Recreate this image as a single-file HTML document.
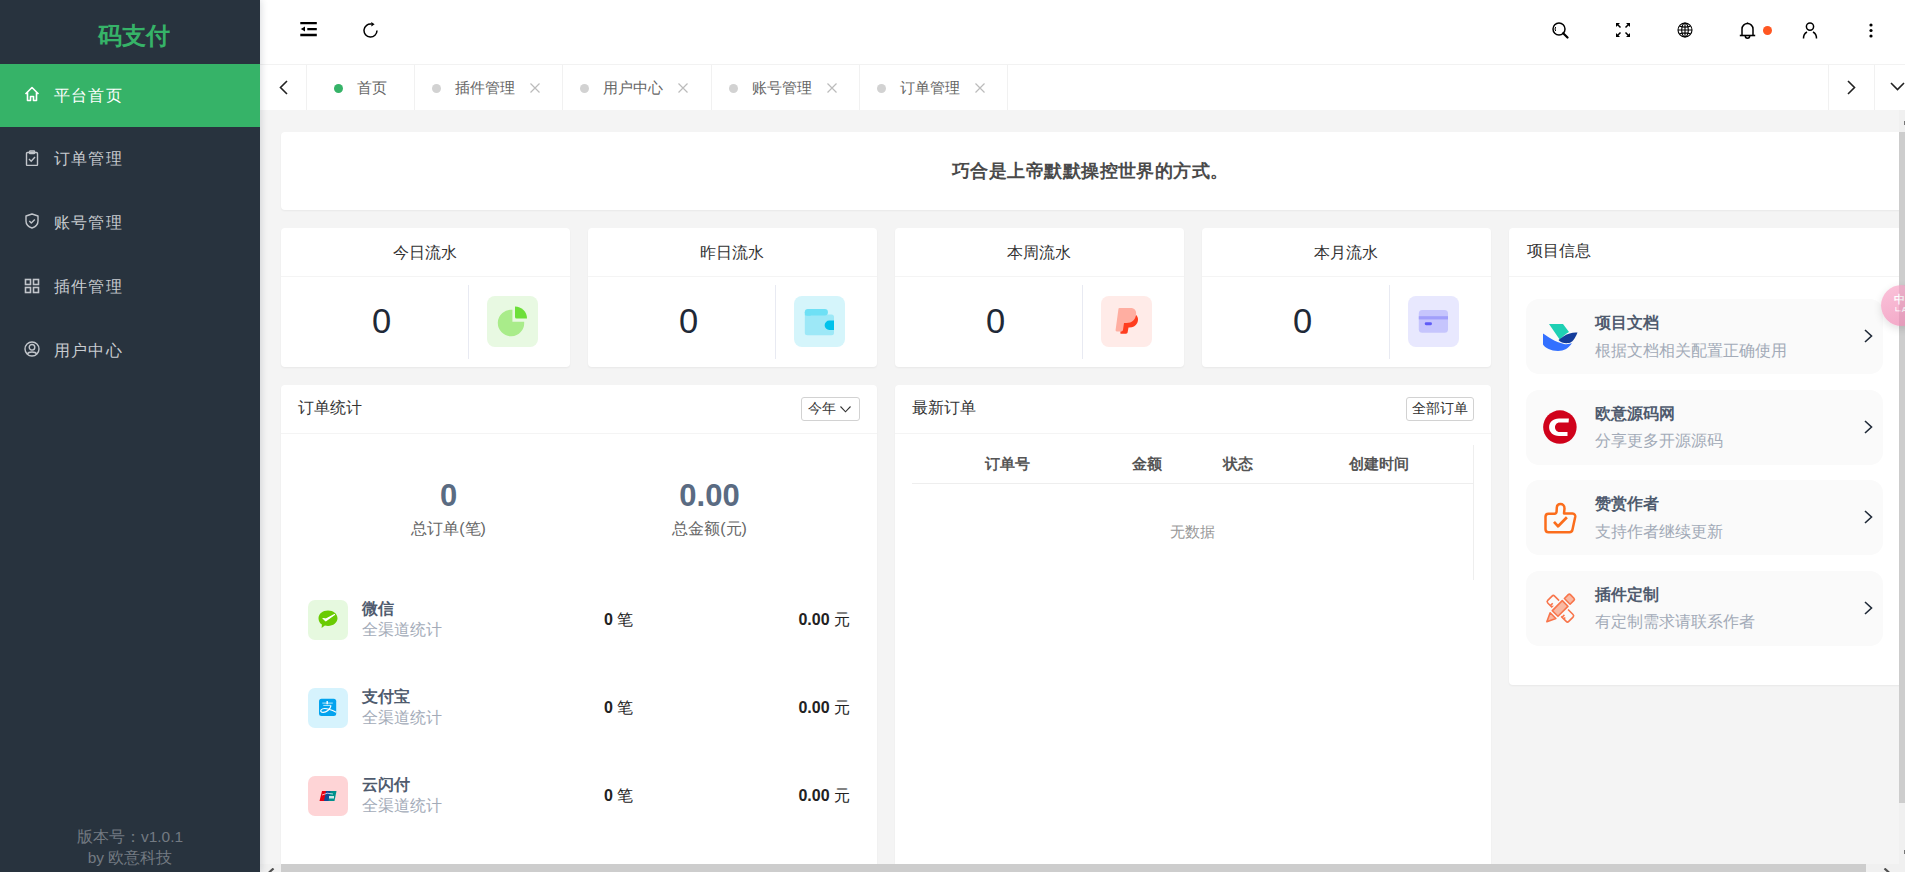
<!DOCTYPE html>
<html><head><meta charset="utf-8">
<style>
*{box-sizing:border-box;margin:0;padding:0}
html,body{width:1905px;height:872px;overflow:hidden;background:#f4f4f4;font-family:"Liberation Sans",sans-serif;color:#333}
.abs{position:absolute}
#side{position:absolute;left:0;top:0;width:260px;height:872px;background:#28333e;z-index:20;box-shadow:1px 0 7px rgba(20,30,50,.16)}
#logo{position:absolute;left:3.5px;top:0.5px;width:260px;height:64px;text-align:center;color:#36b368;font-weight:bold;font-size:24px;line-height:70px;letter-spacing:0}
.mi{position:absolute;left:0;width:260px;height:63.5px;color:#c9ccd0;font-weight:500;font-size:16px;letter-spacing:1.2px}
.mi.on{background:#36b368;color:#fff;height:63px}
.mi svg{position:absolute;left:24px;top:22px;width:16px;height:16px}
.mi span{position:absolute;left:54px;top:20.5px;line-height:22px}
#ver{position:absolute;left:0;top:826px;width:260px;text-align:center;color:#737a82;font-size:15.5px;line-height:21px}
#hdr{position:absolute;left:260px;top:0;width:1645px;height:65px;background:#fff;border-bottom:1px solid #f2f2f2}
#tabs{position:absolute;left:260px;top:65px;width:1645px;height:45px;background:#fff}
.tb{position:absolute;top:0;height:45px;border-right:1px solid #f1f1f1}
.tab{position:absolute;top:0;height:45px;border-right:1px solid #f1f1f1;font-size:14.5px;color:#666}
.tab .dot{position:absolute;top:19px;width:9px;height:9px;border-radius:50%;background:#d2d2d2}
.tab .t{position:absolute;top:12px;line-height:22px}
.tab svg{position:absolute;top:18px;width:10px;height:10px}
.card{position:absolute;background:#fff;border-radius:4px;box-shadow:0 1px 2px rgba(0,0,0,.05)}
.ch{position:absolute;left:0;top:0;width:100%;height:49px;border-bottom:1px solid #f4f4f4}

.st{text-align:center;font-size:16px;line-height:22px;color:#333}
.sv{top:75px;text-align:center;font-size:34.5px;line-height:36px;color:#1f2937}
.dv{left:187px;top:57px;width:1px;height:74px;background:#e8eaf2}
.ib{left:206px;top:68px;width:51px;height:51px;border-radius:8px}.ib svg{position:absolute;left:0;top:0}

.pi{position:absolute;left:17px;width:357px;height:75px;border-radius:13px;background:#fafafa}
.pt{position:absolute;left:69px;top:13px;font-size:16px;font-weight:bold;color:#4f5b6e;line-height:22px}
.ps{position:absolute;left:69px;top:40.5px;font-size:16px;color:#a3abb8;line-height:22px}
.chev{position:absolute;left:338px;top:30px;width:9px;height:14px}

.bn{position:absolute;top:93px;width:201px;text-align:center;font-size:31px;font-weight:bold;color:#5a6b82;line-height:36px}
.bl{position:absolute;top:132.5px;width:201px;text-align:center;font-size:16px;color:#666;line-height:22px}
.rn{position:absolute;left:81px;font-size:16px;font-weight:bold;color:#4f5b6e;line-height:22px}
.rs{position:absolute;left:81px;font-size:16px;color:#a3abb8;line-height:22px}
.rc{position:absolute;left:323px;font-size:16px;color:#222;line-height:22px}
.ra{position:absolute;right:27px;font-size:16px;color:#222;line-height:22px}
.rc b,.ra b{font-weight:bold}

.th{position:absolute;top:68px;font-size:15px;font-weight:bold;color:#555;line-height:22px}
</style></head><body>

<div id="side">
  <div id="logo">码支付</div>
  <div class="mi on" style="top:64px">
    <svg viewBox="0 0 16 16" fill="none" stroke="#fff" stroke-width="1.6" stroke-linejoin="round"><path d="M1.5 8 L8 1.5 L14.5 8 M3.5 6.5 V14.5 H6.5 V10.5 H9.5 V14.5 H12.5 V6.5"/></svg>
    <span>平台首页</span></div>
  <div class="mi" style="top:127.5px">
    <svg viewBox="0 0 16 16" fill="none" stroke="#c2c6cb" stroke-width="1.4"><rect x="2.5" y="2.5" width="11" height="13" rx="1"/><rect x="5.5" y="1" width="5" height="2.5" rx=".5"/><path d="M5 9 L7.2 11.2 L11 7"/></svg>
    <span>订单管理</span></div>
  <div class="mi" style="top:191px">
    <svg viewBox="0 0 16 16" fill="none" stroke="#c2c6cb" stroke-width="1.4" stroke-linejoin="round"><path d="M8 1 L14 3 V8 C14 11.5 11 14 8 15 C5 14 2 11.5 2 8 V3 Z"/><path d="M5.3 8 L7.3 10 L10.8 6.5"/></svg>
    <span>账号管理</span></div>
  <div class="mi" style="top:255.5px">
    <svg viewBox="0 0 16 16" fill="none" stroke="#c2c6cb" stroke-width="1.6"><rect x="1.5" y="1.5" width="5" height="5"/><rect x="9.5" y="1.5" width="5" height="5"/><rect x="1.5" y="9.5" width="5" height="5"/><rect x="9.5" y="9.5" width="5" height="5"/></svg>
    <span>插件管理</span></div>
  <div class="mi" style="top:319px">
    <svg viewBox="0 0 16 16" fill="none" stroke="#c2c6cb" stroke-width="1.4"><circle cx="8" cy="8" r="7"/><circle cx="8" cy="6.3" r="2.8"/><path d="M3.4 12.9 C4.6 10.3 11.4 10.3 12.6 12.9"/></svg>
    <span>用户中心</span></div>
  <div id="ver">版本号：v1.0.1<br>by 欧意科技</div>
</div>

<div id="hdr">
  <svg class="abs" style="left:40px;top:22px" width="17" height="15" viewBox="0 0 17 15"><g stroke="#000" stroke-width="2.3"><path d="M0.3 1.1 H16.8 M7.3 7.1 H16.8 M0.3 13 H16.8"/></g><path d="M0.8 7.1 L5 4.6 V9.6 Z" fill="#000"/></svg>
  <svg class="abs" style="left:103px;top:21.5px" width="17" height="17" viewBox="0 0 17 17" fill="none" stroke="#000" stroke-width="1.5"><path d="M14 8.5 A6.5 6.5 0 1 1 8.6 2.1"/><path d="M8.3 0 L11.6 2.2 L8.4 4.4 Z" fill="#000" stroke="none"/></svg>
  <svg class="abs" style="left:1292px;top:22px" width="17" height="17" viewBox="0 0 17 17" fill="none" stroke="#000" stroke-width="1.5"><circle cx="7" cy="7" r="6"/><path d="M3.6 5 A4 4 0 0 0 3.6 9" stroke-width="1"/><path d="M11.2 11.2 L15.5 15.5" stroke-width="2.2" stroke-linecap="round"/></svg>
  <svg class="abs" style="left:1355px;top:22px" width="16" height="16" viewBox="0 0 16 16" fill="none" stroke="#000" stroke-width="1.5"><path d="M1.5 1.5 L5.5 5.5 M10.5 5.5 L14.5 1.5 M1.5 14.5 L5.5 10.5 M10.5 10.5 L14.5 14.5"/><path d="M1 1 H5 L1 5 Z M15 1 H11 L15 5 Z M1 15 H5 L1 11 Z M15 15 H11 L15 11 Z" fill="#000" stroke="none"/></svg>
  <svg class="abs" style="left:1417px;top:22px" width="16" height="16" viewBox="0 0 16 16" fill="none" stroke="#000" stroke-width="1.1"><circle cx="8" cy="8" r="7"/><ellipse cx="8" cy="8" rx="3.3" ry="7"/><path d="M8 1 V15 M1 8 H15 M2.8 4.3 Q8 6 13.2 4.3 M2.8 11.7 Q8 10 13.2 11.7"/></svg>
  <svg class="abs" style="left:1479px;top:22px" width="17" height="17" viewBox="0 0 17 17" fill="none" stroke="#000" stroke-width="1.5"><path d="M3 13 V7 A5.5 5.5 0 0 1 14 7 V13"/><path d="M0.8 13.5 H16.2" stroke-width="1.6"/><path d="M6.3 14 A2.2 2.2 0 0 0 10.7 14"/><path d="M8.5 0.5 V1.8"/></svg>
  <div class="abs" style="left:1503px;top:26px;width:9px;height:9px;border-radius:50%;background:#ff5722"></div>
  <svg class="abs" style="left:1542px;top:22px" width="16" height="17" viewBox="0 0 16 17" fill="none" stroke="#000" stroke-width="1.5"><circle cx="8" cy="4.6" r="3.6"/><path d="M1.5 16.5 A6.5 7 0 0 1 5 10 M11 10 A6.5 7 0 0 1 14.5 16.5"/></svg>
  <svg class="abs" style="left:1609px;top:23px" width="4" height="15" viewBox="0 0 4 15" fill="#000"><circle cx="2" cy="2" r="1.6"/><circle cx="2" cy="7.5" r="1.6"/><circle cx="2" cy="13" r="1.6"/></svg>
</div>
<div id="tabs">
  <div class="tb" style="left:0;width:47px"><svg class="abs" style="left:19px;top:15px" width="9" height="15" viewBox="0 0 9 15" fill="none" stroke="#222" stroke-width="1.6"><path d="M8 1 L1.5 7.5 L8 14"/></svg></div>
  <div class="tab" style="left:47px;width:108px"><div class="dot" style="left:27px;background:#36b368"></div><div class="t" style="left:50px">首页</div></div>
  <div class="tab" style="left:155px;width:148px"><div class="dot" style="left:17px"></div><div class="t" style="left:40px">插件管理</div><svg style="left:115px" viewBox="0 0 10 10" stroke="#bbb" stroke-width="1.2"><path d="M0.5 0.5 L9.5 9.5 M9.5 0.5 L0.5 9.5"/></svg></div>
  <div class="tab" style="left:303px;width:148.5px"><div class="dot" style="left:17px"></div><div class="t" style="left:40px">用户中心</div><svg style="left:115px" viewBox="0 0 10 10" stroke="#bbb" stroke-width="1.2"><path d="M0.5 0.5 L9.5 9.5 M9.5 0.5 L0.5 9.5"/></svg></div>
  <div class="tab" style="left:451.5px;width:148px"><div class="dot" style="left:17px"></div><div class="t" style="left:40px">账号管理</div><svg style="left:115px" viewBox="0 0 10 10" stroke="#bbb" stroke-width="1.2"><path d="M0.5 0.5 L9.5 9.5 M9.5 0.5 L0.5 9.5"/></svg></div>
  <div class="tab" style="left:599.5px;width:148px"><div class="dot" style="left:17px"></div><div class="t" style="left:40px">订单管理</div><svg style="left:115px" viewBox="0 0 10 10" stroke="#bbb" stroke-width="1.2"><path d="M0.5 0.5 L9.5 9.5 M9.5 0.5 L0.5 9.5"/></svg></div>
  <div class="abs" style="left:1568px;top:0;width:1px;height:45px;background:#f1f1f1"></div>
  <svg class="abs" style="left:1587px;top:15px" width="9" height="15" viewBox="0 0 9 15" fill="none" stroke="#222" stroke-width="1.6"><path d="M1 1 L7.5 7.5 L1 14"/></svg>
  <div class="abs" style="left:1614px;top:0;width:1px;height:45px;background:#f1f1f1"></div>
  <svg class="abs" style="left:1630px;top:17px" width="15" height="9" viewBox="0 0 15 9" fill="none" stroke="#222" stroke-width="1.6"><path d="M1 1 L7.5 7.5 L14 1"/></svg>
</div>


<div class="card" style="left:281px;top:132px;width:1640px;height:78px">
  <div class="abs" style="left:671px;top:27px;font-size:18px;letter-spacing:.45px;font-weight:bold;color:#4a4a4a;line-height:24px;white-space:nowrap">巧合是上帝默默操控世界的方式。</div>
</div>

<div class="card" style="left:281px;top:228px;width:289px;height:139px"><div class="ch"></div>
  <div class="abs st" style="left:-1px;top:14px;width:289px">今日流水</div>
  <div class="abs sv" style="left:0;width:201px">0</div>
  <div class="abs dv"></div>
  <div class="abs ib" style="background:#e8f9e2"><svg width="51" height="51" viewBox="0 0 51 51"><path d="M25.4 13.87 A13.2 13.2 0 1 0 37.14 25.7 H25.4 Z" fill="#a9ec8a"/><path d="M28 10.5 A12 12 0 0 1 40 22.5 H29.5 Q28 22.5 28 21 Z" fill="#6ddf3a"/></svg></div>
</div>
<div class="card" style="left:588px;top:228px;width:289px;height:139px"><div class="ch"></div>
  <div class="abs st" style="left:-1px;top:14px;width:289px">昨日流水</div>
  <div class="abs sv" style="left:0;width:201px">0</div>
  <div class="abs dv"></div>
  <div class="abs ib" style="background:#d5f5fb"><svg width="51" height="51" viewBox="0 0 51 51"><rect x="10.8" y="18.5" width="29.2" height="20.7" rx="2.5" fill="#9de8f7"/><rect x="10.8" y="12.9" width="23.1" height="6.7" rx="3" fill="#6ee0f5"/><rect x="10.8" y="16" width="6" height="3.6" fill="#6ee0f5"/><path d="M40 24.6 H35.3 A4.65 4.65 0 0 0 35.3 33.9 H40 Z" fill="#00c2eb"/></svg></div>
</div>
<div class="card" style="left:895px;top:228px;width:289px;height:139px"><div class="ch"></div>
  <div class="abs st" style="left:-1px;top:14px;width:289px">本周流水</div>
  <div class="abs sv" style="left:0;width:201px">0</div>
  <div class="abs dv"></div>
  <div class="abs ib" style="background:#ffebe8"><svg width="51" height="51" viewBox="0 0 51 51"><path d="M19.5 37.7 C19.3 36.8 19.3 36.4 19.5 35.5 L21.5 23 H27 C31.5 23 34 21 34.8 18.7 C37.3 20.5 37.6 24 36.2 27 C34.7 30 31.8 31.5 28.3 31.5 H27.5 L26.7 36 C26.5 37 26 37.7 25 37.7 Z" fill="#ff3d1f"/><path d="M17.5 12.5 C17.7 12.2 18 12 18.5 12 H29.5 C33.5 12 35.6 14.6 35.1 18.5 C34.5 23.5 30.8 27 25.5 27 H23 L22 33.8 C21.8 34.8 21.2 35.4 20.3 35.4 H15.8 C15 35.4 14.5 34.8 14.6 34 Z" fill="#ffaea1"/></svg></div>
</div>
<div class="card" style="left:1202px;top:228px;width:289px;height:139px"><div class="ch"></div>
  <div class="abs st" style="left:-1px;top:14px;width:289px">本月流水</div>
  <div class="abs sv" style="left:0;width:201px">0</div>
  <div class="abs dv"></div>
  <div class="abs ib" style="background:#e8e8fe"><svg width="51" height="51" viewBox="0 0 51 51"><rect x="10.8" y="14" width="29.2" height="22.8" rx="3.5" fill="#c6c5fd"/><rect x="10.8" y="20.2" width="29.2" height="3.2" fill="#a19ffb"/><rect x="16.7" y="26.3" width="7.3" height="2.9" rx="1.45" fill="#5f5cf6"/></svg></div>
</div>

<div class="card" style="left:1509px;top:228px;width:420px;height:457px"><div class="ch"></div>
  <div class="abs" style="left:18px;top:12px;font-size:16px;line-height:22px;color:#333">项目信息</div>
  <div class="pi" style="top:71px">
    <svg class="abs" style="left:17px;top:25px" width="35" height="27" viewBox="0 0 35 27"><path d="M6 0 H20 L26 8 C22 10 19 13 17 16 Z" fill="#1ed0b4"/><path d="M34.5 8.5 C30 8 25 9.5 21 12 L15.5 16 C18 19 22 19.5 26 19 C29 18.5 32 15 34.5 8.5 Z" fill="#133c9a"/><path d="M0 9.5 C5 13 12 18 21 20 C24 20.5 27 20 29 19 C26 24 21 27 15 27 C8 27 2 24 0 20.5 Z" fill="#3370ff"/></svg>
    <div class="pt">项目文档</div><div class="ps">根据文档相关配置正确使用</div><svg class="chev" viewBox="0 0 9 14" fill="none" stroke="#1f2937" stroke-width="1.6"><path d="M1 1 L7.5 7 L1 13"/></svg></div>
  <div class="pi" style="top:161.5px">
    <svg class="abs" style="left:17px;top:20px" width="35" height="35" viewBox="0 0 35 35"><circle cx="16.9" cy="17.1" r="16.75" fill="#d0021b"/><path d="M25.9 8.6 H16 C10 8.6 6.1 12.5 6.1 17.2 C6.1 22 10 25.9 16 25.9 H24.5 V22 H16.5 C13.8 22 12 19.8 12 17.25 C12 14.7 13.8 12.5 16.5 12.5 H25.6 Z" fill="#fff"/></svg>
    <div class="pt">欧意源码网</div><div class="ps">分享更多开源源码</div><svg class="chev" viewBox="0 0 9 14" fill="none" stroke="#1f2937" stroke-width="1.6"><path d="M1 1 L7.5 7 L1 13"/></svg></div>
  <div class="pi" style="top:252px">
    <svg class="abs" style="left:17px;top:19px" width="36" height="36" viewBox="0 0 36 36" fill="none" stroke="#fb6d1c" stroke-width="2.5" stroke-linejoin="round"><path d="M5.5 14.8 H11.5 C12.8 14.8 13.5 13.8 13.6 12.5 L13.8 8.5 C14 6 15.8 5 17.5 5 C19.5 5 21.5 6.5 21.5 9.5 L21 14.5 H29.5 C31.5 14.5 32.5 16.3 32.2 18 L29.5 30.5 C29.2 32.2 28.2 33.2 26.5 33.2 H5.5 C3.8 33.2 2.5 32 2.5 30.2 V17.8 C2.5 16 3.8 14.8 5.5 14.8 Z"/><path d="M11 22.8 L15.1 27.3 L23.9 18.2" stroke-width="2.7"/></svg>
    <div class="pt">赞赏作者</div><div class="ps">支持作者继续更新</div><svg class="chev" viewBox="0 0 9 14" fill="none" stroke="#1f2937" stroke-width="1.6"><path d="M1 1 L7.5 7 L1 13"/></svg></div>
  <div class="pi" style="top:342.5px">
    <svg class="abs" style="left:18px;top:20px" width="36" height="36" viewBox="0 0 36 36" stroke-linejoin="round">
<g transform="translate(5.9 7.25) rotate(45)" stroke="#f8754b" stroke-width="1.6" fill="none"><rect x="0" y="-4.85" width="29.7" height="9.7" rx="1.8" fill="#fafafa"/><path d="M5.5 4.85 V1.5 M8 4.85 V2.8 M22 4.85 V1.5 M24.5 4.85 V2.8"/></g>
<g transform="translate(2.5 31.1) rotate(-45)" stroke-width="1.6">
<path d="M0.5 0 L9.2 -4.05 V4.05 Z M12.2 -4 H26.3 V4 H12.2 Z M29.3 -4 H34.8 Q36.3 -4 36.3 -2.5 V2.5 Q36.3 4 34.8 4 H29.3 Z" fill="none" stroke="#fafafa" stroke-width="4.5"/>
<path d="M0.5 0 L9.2 -4.05 V4.05 Z" fill="#f9b9a3" stroke="#f8754b"/>
<rect x="12.2" y="-4" width="14.1" height="8" fill="#f9b9a3" stroke="#f8754b"/>
<path d="M29.3 -4 H34.8 Q36.3 -4 36.3 -2.5 V2.5 Q36.3 4 34.8 4 H29.3 Z" fill="#f9b9a3" stroke="#f8754b"/>
</g></svg>
    <div class="pt">插件定制</div><div class="ps">有定制需求请联系作者</div><svg class="chev" viewBox="0 0 9 14" fill="none" stroke="#1f2937" stroke-width="1.6"><path d="M1 1 L7.5 7 L1 13"/></svg></div>
</div>

<div class="card" style="left:281px;top:385px;width:596px;height:520px"><div class="ch"></div>
  <div class="abs" style="left:17px;top:12px;font-size:16px;line-height:22px;color:#333">订单统计</div>
  <div class="abs" style="left:520px;top:12px;width:59px;height:24px;border:1px solid #d2d2d2;border-radius:3px;font-size:13.5px;line-height:21px;color:#333;padding-left:6px">今年<svg class="abs" style="left:38px;top:8px" width="11" height="7" viewBox="0 0 11 7" fill="none" stroke="#333" stroke-width="1.1"><path d="M0.5 0.5 L5.5 5.8 L10.5 0.5"/></svg></div>
  <div class="bn" style="left:67px">0</div><div class="bl" style="left:67px">总订单(笔)</div>
  <div class="bn" style="left:328px">0.00</div><div class="bl" style="left:328px">总金额(元)</div>
  <div class="abs" style="left:27px;top:215px;width:40px;height:40px;border-radius:7px;background:#e6f9df"><svg class="abs" style="left:10px;top:10px" width="20" height="19" viewBox="0 0 20 19"><path d="M10 0.5 C15.3 0.5 19.5 3.9 19.5 8.2 C19.5 12.5 15.3 15.9 10 15.9 C8.9 15.9 7.9 15.8 6.9 15.5 L3.6 18 L3.9 14.6 C1.9 13.2 0.5 10.8 0.5 8.2 C0.5 3.9 4.7 0.5 10 0.5 Z" fill="#6acb03"/><path d="M5 8.6 L7.8 10.8 L16.5 4.6 L8 9 Z" fill="#fff" stroke="#fff" stroke-width="1.2" stroke-linejoin="round"/></svg></div>
  <div class="rn" style="top:213px">微信</div><div class="rs" style="top:234px">全渠道统计</div>
  <div class="rc" style="top:224px"><b>0</b> 笔</div><div class="ra" style="top:224px"><b>0.00</b> 元</div>
  <div class="abs" style="left:27px;top:303px;width:40px;height:40px;border-radius:7px;background:#d6f3fd"><svg class="abs" style="left:0;top:0" width="40" height="40" viewBox="0 0 40 40"><rect x="11" y="10.8" width="17.2" height="17.2" rx="2.5" fill="#03a3ee"/><path d="M14.3 15.1 H24.8 M15.3 17.4 H23.2" stroke="#cfeffc" stroke-width="0.9"/><path d="M19.2 13 V16.3" stroke="#fff" stroke-width="1.4"/><path d="M23 17.6 C22 21.8 18.3 24.3 15.2 24.3 C13 24.3 12.3 23 13 22 C14.5 20 19 19.6 28.2 24.2" fill="none" stroke="#fff" stroke-width="1.2"/></svg></div>
  <div class="rn" style="top:301px">支付宝</div><div class="rs" style="top:322px">全渠道统计</div>
  <div class="rc" style="top:312px"><b>0</b> 笔</div><div class="ra" style="top:312px"><b>0.00</b> 元</div>
  <div class="abs" style="left:27px;top:391px;width:40px;height:40px;border-radius:7px;background:#fed4d6"><svg class="abs" style="left:11px;top:15px" width="18" height="10" viewBox="0 0 18 10"><path d="M3 0 H8 L6 10 H0.5 Z" fill="#e60012"/><path d="M7 0 H12.5 L10.5 10 H5 Z" fill="#0e4c96"/><path d="M11.5 0 H17.5 L15.5 10 H9.5 Z" fill="#00908c"/><path d="M3 4 Q8 1 14 3" stroke="#fff" stroke-width=".7" fill="none"/><rect x="10" y="5" width="5" height="2.5" fill="#fff" opacity=".8"/></svg></div>
  <div class="rn" style="top:389px">云闪付</div><div class="rs" style="top:410px">全渠道统计</div>
  <div class="rc" style="top:400px"><b>0</b> 笔</div><div class="ra" style="top:400px"><b>0.00</b> 元</div>

</div>

<div class="card" style="left:895px;top:385px;width:596px;height:520px"><div class="ch"></div>
  <div class="abs" style="left:17px;top:12px;font-size:16px;line-height:22px;color:#333">最新订单</div>
  <div class="abs" style="left:511px;top:12px;width:68px;height:24px;border:1px solid #d2d2d2;border-radius:3px;font-size:13.5px;line-height:21px;color:#333;text-align:center">全部订单</div>
  <div class="abs" style="left:17px;top:98px;width:562px;height:1px;background:#eee"></div>
  <div class="abs" style="left:578px;top:60px;width:1px;height:135px;background:#eee"></div>
  <div class="th" style="left:90px">订单号</div>
  <div class="th" style="left:237px">金额</div>
  <div class="th" style="left:328px">状态</div>
  <div class="th" style="left:454px">创建时间</div>
  <div class="abs" style="left:275px;top:136px;font-size:14.5px;line-height:22px;color:#999">无数据</div>
</div>

<div class="abs" style="left:1899px;top:110px;width:6px;height:754px;background:#f0f0f0;z-index:8"></div>
<div class="abs" style="left:1899px;top:132px;width:6px;height:671px;background:#cdcdcd;z-index:8"></div>
<div class="abs" style="left:1904px;top:121px;width:1px;height:4px;background:#777;z-index:8"></div>
<div class="abs" style="left:1904px;top:850px;width:1px;height:4px;background:#777;z-index:8"></div>
<div class="abs" style="left:260px;top:864px;width:1645px;height:8px;background:#f0f0f0;z-index:8"></div>
<div class="abs" style="left:281px;top:864px;width:1585px;height:8px;background:#cdcdcd;z-index:8"></div>
<svg class="abs" style="left:266px;top:868px;z-index:8" width="9" height="4" viewBox="0 0 9 4"><path d="M7.5 0.5 L3 4.5" fill="none" stroke="#505050" stroke-width="2.2"/></svg>
<svg class="abs" style="left:1883px;top:868px;z-index:8" width="9" height="4" viewBox="0 0 9 4"><path d="M1.5 0.5 L6 4.5" fill="none" stroke="#505050" stroke-width="2.2"/></svg>
<div class="abs" style="left:1880.5px;top:285px;width:41px;height:41px;border-radius:50%;background:linear-gradient(160deg,#fbc3da,#f2a6c6);z-index:9;box-shadow:0 3px 8px rgba(0,0,0,.12);overflow:hidden"><div class="abs" style="left:13px;top:9px;color:#fff;font-size:11px;font-weight:bold;line-height:11px">中</div><div class="abs" style="left:13px;top:21px;color:#fff;font-size:8px;font-weight:bold;line-height:8px">ㄴA</div></div>
<div class="abs" style="left:1899px;top:285px;width:6px;height:41px;background:rgba(120,60,90,.12);z-index:10"></div>
</body></html>
